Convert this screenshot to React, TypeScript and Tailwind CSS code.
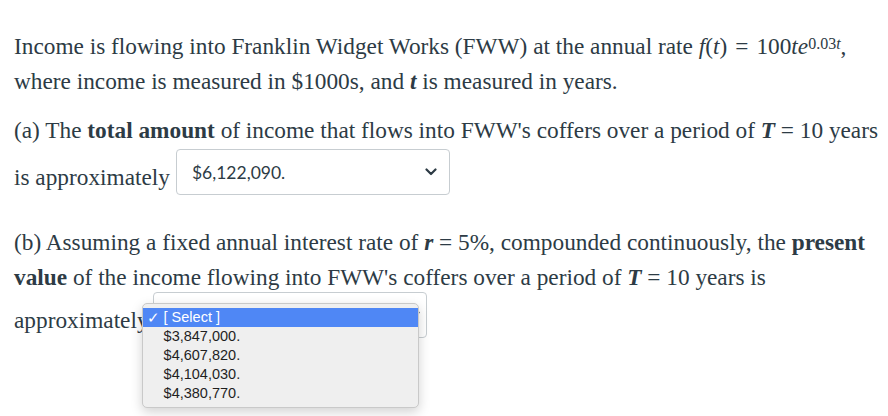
import React from "react";

const serif = "font-['Liberation_Serif','Times_New_Roman',serif]";

function Chevron({ className }: { className?: string }) {
  return (
    <svg className={className} width="12" height="8" viewBox="0 0 12 8" fill="none">
      <path d="M1.5 1.5 L6 6 L10.5 1.5" stroke="#2d3b45" strokeWidth="2.2" strokeLinecap="round" strokeLinejoin="round" />
    </svg>
  );
}

export default function App() {
  const items = ["$3,847,000.", "$4,607,820.", "$4,104,030.", "$4,380,770."];
  return (
    <div className={`w-[888px] h-[416px] bg-white text-[#2d3b45] ${serif} text-[23.3px] leading-[35px] pl-[14px] pt-[29px] overflow-hidden`}>
      <p className="whitespace-nowrap">
        Income is flowing into Franklin Widget Works (FWW) at the annual rate{" "}
        <span className="italic">f</span>(<span className="italic">t</span>)<span className="px-[8px]">=</span>100<span className="italic">te</span>
        <sup className="text-[16px] relative top-[-5px]">
          0.03<span className="italic">t</span>
        </sup>
        ,
      </p>
      <p className="whitespace-nowrap">
        where income is measured in $1000s, and <b className="italic">t</b> is measured in years.
      </p>

      <p className="whitespace-nowrap mt-[14px]">
        (a) The <b>total amount</b> of income that flows into FWW's coffers over a period of <b className="italic">T</b> = 10 years
      </p>
      <div className="flex items-center whitespace-nowrap mt-[1px] h-[46px]">
        <span className="relative top-[5px]">is approximately</span>
        <div className="ml-[6px] w-[274px] h-[46px] border border-[#c7cdd1] rounded-[4px] bg-white flex items-center justify-between pl-[15px] pr-[12px] font-['Lato',sans-serif] text-[17.5px] text-[#2d3b45]">
          <span>$6,122,090.</span>
          <Chevron />
        </div>
      </div>

      <p className="whitespace-nowrap mt-[30px]">
        (b) Assuming a fixed annual interest rate of <b className="italic">r</b> = 5%, compounded continuously, the <b>present</b>
      </p>
      <p className="whitespace-nowrap">
        <b>value</b> of the income flowing into FWW's coffers over a period of <b className="italic">T</b> = 10 years is
      </p>
      <div className="flex items-center whitespace-nowrap mt-[-3px] h-[46px]">
        <span className="relative top-[5px]">approximately</span>
        <div className="relative ml-[4px] w-[274px] h-[46px] border border-[#c7cdd1] rounded-[4px] bg-white flex items-center justify-end pr-[6px]">
          <Chevron />
          <div className="absolute left-[-12px] top-[10px] w-[277px] rounded-[5px] border border-[#c9c9c9] bg-[#efefef] shadow-[0_4px_12px_rgba(0,0,0,0.18)] pt-[4px] pb-[4px] font-['Liberation_Sans',Arial,sans-serif] text-[14.5px] leading-[19px] text-[#1f1f1f]">
            <div className="h-[19px] bg-[#4f87f5] text-white flex items-center">
              <span className="w-[21px] pl-[4px] text-[15px] leading-[19px]">✓</span>
              <span>[ Select ]</span>
            </div>
            {items.map((it) => (
              <div key={it} className="h-[19px] flex items-center">
                <span className="w-[21px]" />
                <span>{it}</span>
              </div>
            ))}
          </div>
        </div>
      </div>
    </div>
  );
}
